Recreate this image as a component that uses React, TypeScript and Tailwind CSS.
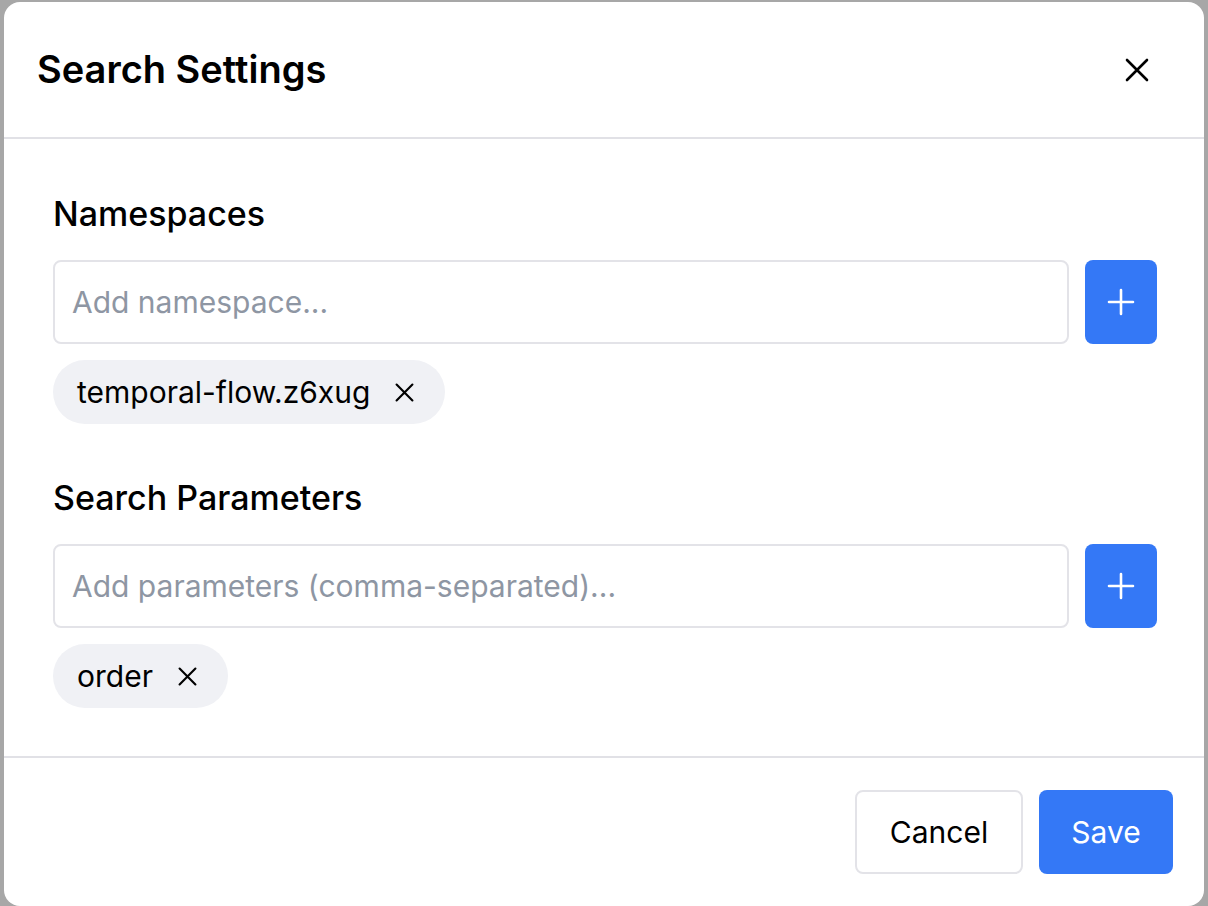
import { useState } from 'react'

const font = { fontFamily: 'Inter, "Noto Sans", sans-serif' }

function CloseIcon({ size, stroke }: { size: number; stroke: number }) {
  return (
    <svg width={size} height={size} viewBox="0 0 24 24" fill="none" stroke="currentColor" strokeWidth={stroke} strokeLinecap="round">
      <path d="M2 2L22 22M22 2L2 22" />
    </svg>
  )
}

function PlusIcon() {
  return (
    <svg width="28" height="28" viewBox="0 0 28 28" fill="none" stroke="currentColor" strokeWidth="2.6" strokeLinecap="round">
      <path d="M14 2V26M2 14H26" />
    </svg>
  )
}

function Chip({ label, onRemove }: { label: string; onRemove: () => void }) {
  return (
    <div className="flex h-[64px] items-center rounded-full bg-[#f0f1f5] pl-[24px] pr-[31px] text-[30px] text-black">
      <span>{label}</span>
      <button onClick={onRemove} className="ml-[25px] flex items-center text-black">
        <CloseIcon size={19} stroke={2.7} />
      </button>
    </div>
  )
}

function TagSection({
  title,
  placeholder,
  items,
  onRemove,
  className,
}: {
  title: string
  placeholder: string
  items: string[]
  onRemove: (v: string) => void
  className?: string
}) {
  return (
    <section className={className}>
      <h3 className="text-[34px] font-medium leading-[40px] text-black">{title}</h3>
      <div className="mt-[26px] flex gap-[16px]">
        <input
          placeholder={placeholder}
          className="h-[84px] flex-1 rounded-[8px] border-2 border-[#e3e3e8] px-[17px] text-[30px] text-black outline-none placeholder:text-[#8e96a3]"
        />
        <button className="flex h-[84px] w-[72px] items-center justify-center rounded-[8px] bg-[#3478f6] text-white">
          <PlusIcon />
        </button>
      </div>
      <div className="mt-[16px] flex flex-wrap gap-[12px]">
        {items.map(it => (
          <Chip key={it} label={it} onRemove={() => onRemove(it)} />
        ))}
      </div>
    </section>
  )
}

export default function App() {
  const [namespaces, setNamespaces] = useState(['temporal-flow.z6xug'])
  const [params, setParams] = useState(['order'])

  return (
    <div className="h-[906px] w-[1208px] overflow-hidden bg-[#a7a7a7] px-[4px] pt-[2px]" style={font}>
      <div className="flex h-[904px] flex-col overflow-hidden rounded-[16px] bg-white">
        {/* header */}
        <header className="flex h-[137px] shrink-0 items-center justify-between border-b-2 border-[#e1e1e6] pl-[33px] pr-[55px]">
          <h2 className="text-[38px] font-semibold text-black">Search Settings</h2>
          <button className="text-black">
            <CloseIcon size={24} stroke={2.6} />
          </button>
        </header>

        {/* body */}
        <div className="pb-[48px] pl-[49px] pr-[47px] pt-[55px]">
          <TagSection
            title="Namespaces"
            placeholder="Add namespace..."
            items={namespaces}
            onRemove={v => setNamespaces(namespaces.filter(n => n !== v))}
          />
          <TagSection
            className="mt-[54px]"
            title="Search Parameters"
            placeholder="Add parameters (comma-separated)..."
            items={params}
            onRemove={v => setParams(params.filter(p => p !== v))}
          />
        </div>

        {/* footer */}
        <footer className="flex justify-end gap-[16px] border-t-2 border-[#e1e1e6] pr-[31px] pt-[32px]">
          <button className="h-[84px] w-[168px] rounded-[8px] border-2 border-[#e3e3e8] text-[30px] text-black">
            Cancel
          </button>
          <button className="h-[84px] w-[134px] rounded-[8px] bg-[#3478f6] text-[30px] text-white">
            Save
          </button>
        </footer>
      </div>
    </div>
  )
}
